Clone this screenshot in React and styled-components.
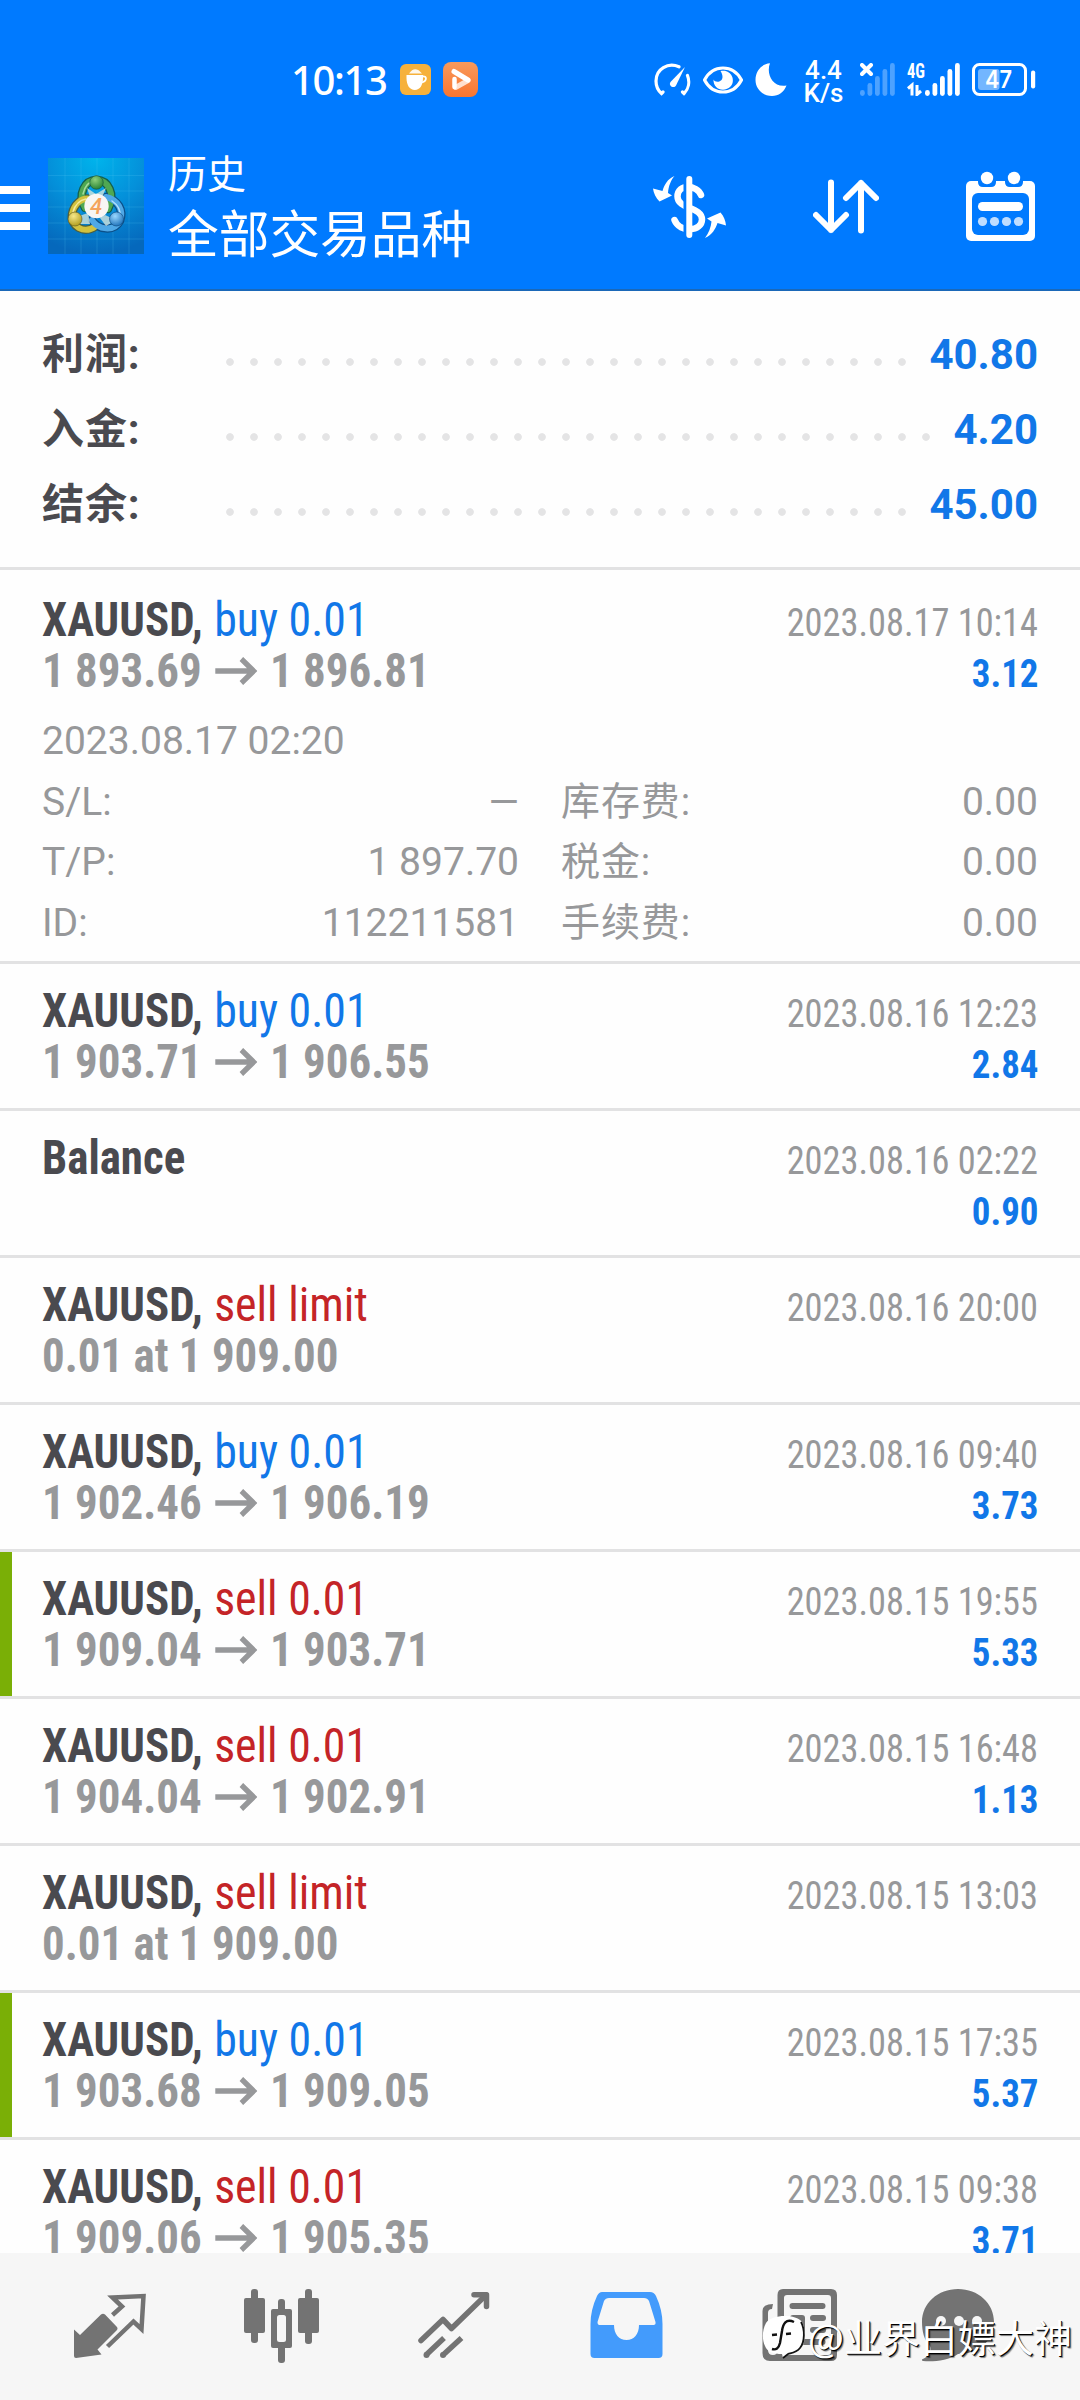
import React from "react";
import styled, { createGlobalStyle } from "styled-components";

const sans = `Roboto, "Noto Sans CJK SC", sans-serif`;
const condensed = `"Roboto Condensed", Roboto, "Noto Sans CJK SC", sans-serif`;

const Global = createGlobalStyle`
  body { margin: 0; background: #fefefe; }
  * { box-sizing: border-box; }
  svg { display: block; flex: none; }
`;

const Screen = styled.div`
  position: relative;
  width: 1080px;
  height: 2400px;
  display: flex;
  flex-direction: column;
  overflow: hidden;
  background: #fefefe;
  font-family: ${sans};
`;

const Header = styled.header`
  flex: none;
  height: 291px;
  background: #007aff;
  border-bottom: 2px solid #1b68b8;
  color: #fff;
`;

const StatusBar = styled.div`
  height: 123px;
  padding: 36px 44px 0 291px;
  display: flex;
  align-items: center;
`;

const Clock = styled.span`
  width: 109px;
  font: 500 40px/56px "Noto Sans", sans-serif;
  letter-spacing: -1.4px;
`;

const StatusApps = styled.div`
  display: flex;
  align-items: center;
  gap: 12px;
  flex: 1;
`;

const StatusIcons = styled.div`
  display: flex;
  align-items: center;
  gap: 11px;
`;

const NetSpeed = styled.div`
  width: 51px;
  margin-top: 4px;
  display: flex;
  flex-direction: column;
  align-items: center;
  font: 500 26px/22.5px Roboto, sans-serif;
`;

const AppBar = styled.div`
  height: 166px;
  padding-right: 45px;
  display: flex;
  align-items: center;
`;

const MenuButton = styled.div`
  width: 30px;
  height: 44px;
  margin: 4px 18px 0 0;
  display: flex;
  flex-direction: column;
  justify-content: space-between;
`;

const MenuBar = styled.i`
  height: 8px;
  background: #fff;
`;

const Titles = styled.div`
  flex: 1;
  margin: 8px 0 0 24px;
`;

const Subtitle = styled.div`
  font-size: 39px;
  line-height: 51px;
`;

const Title = styled.div`
  font-size: 50.7px;
  line-height: 70px;
`;

const Actions = styled.div`
  margin-top: 1px;
  display: flex;
  align-items: center;
  gap: 87px;
`;

const Summary = styled.section`
  flex: none;
  padding: 26px 42px 25px;
  border-bottom: 3px solid #e2e2e3;
`;

const SummaryRow = styled.div`
  height: 75px;
  display: flex;
  font-size: 42px;
  font-weight: 700;
  line-height: 75px;
`;

const SummaryLabel = styled.span`
  width: 176px;
  color: #4a4a4f;
  letter-spacing: 0.9px;
`;

const Leader = styled.span`
  flex: 1;
  height: 12px;
  margin: 39px 10px 0 0;
  background: radial-gradient(circle at 12px 6px, #e4e4e5 3.4px, transparent 4.2px) 0 0 / 24px 12px repeat-x;
`;

const SummaryValue = styled.span`
  color: #1177e8;
`;

const List = styled.main`
  flex: 1;
  min-height: 0;
  overflow: hidden;
`;

const Item = styled.article`
  height: ${(p) => (p.$open ? 394 : 147)}px;
  display: flex;
  border-bottom: 3px solid #e2e2e3;
`;

const Marker = styled.div`
  width: 12px;
  background: ${(p) => (p.$on ? "#7aaf06" : "transparent")};
`;

const Body = styled.div`
  flex: 1;
  padding: ${(p) => (p.$open ? 24 : 21)}px 42px 0 30px;
`;

const Deal = styled.div`
  display: flex;
  justify-content: space-between;
  font-family: ${condensed};
`;

const Left = styled.div`
  width: 500px;
  font-size: 48px;
  line-height: 51px;
  white-space: pre;
`;

const Right = styled.div`
  width: 290px;
  padding-top: 4px;
  font-size: 39px;
  line-height: 51px;
  color: #97989a;
`;

const Line = styled.div`
  height: 51px;
  display: flex;
  justify-content: ${(p) => (p.$end ? "flex-end" : "flex-start")};
  transform: scaleX(${(p) => (p.$end ? 0.932 : 0.936)});
  transform-origin: ${(p) => (p.$end ? "right" : "left")};
`;

const Ticker = styled.b`
  color: #4a4a4f;
`;

const Side = styled.span`
  margin-left: 1.5px;
  color: ${(p) => (p.$sell ? "#c42427" : "#1177e8")};
  transform: scaleX(1.02);
  transform-origin: left;
`;

const Price = styled.b`
  display: flex;
  align-items: center;
  gap: 14px;
  color: #97989a;
`;

const Profit = styled.b`
  color: #1177e8;
  transform: scaleX(1.015);
  transform-origin: right;
`;

const Details = styled.div`
  margin-top: 11px;
  color: #97989a;
  font-size: 39px;
  line-height: 60.5px;
`;

const DetailGrid = styled.div`
  display: grid;
  grid-template-columns: 477px 477px;
  column-gap: 42px;
`;

const Detail = styled.div`
  display: flex;
  justify-content: space-between;
`;

const DetailLabel = styled.span`
  letter-spacing: ${(p) => (p.$wide ? 0.9 : 0)}px;
`;

const TabBar = styled.nav`
  flex: none;
  height: 147px;
  padding: 25px 24px 0;
  display: grid;
  grid-template-columns: repeat(6, 172px);
  justify-items: center;
  align-items: start;
  background: #f6f6f6;
`;

const Watermark = styled.div`
  position: absolute;
  left: 762px;
  top: 2309px;
  display: flex;
  align-items: center;
  gap: 3px;
  color: #fff;
  font: 400 38px/54px "Noto Sans CJK SC", sans-serif;
  text-shadow: 1px 1px 0 #000, 2px 2px 1px rgba(0, 0, 0, 0.5);
`;

const CupIcon = () => (
  <svg width="31" height="31" viewBox="0 0 31 31">
    <rect width="31" height="31" rx="6" fill="#f6b13c" />
    <path d="M9 9.500Q15 1 22 9.500Z" fill="#fff" opacity=".9" />
    <path d="M6.500 11H23v3c0 7-3 12-8.200 12S6.500 21 6.500 14z" fill="#fff" />
    <path d="M22.500 12.500c4.500-1 4.800 4.500-.5 6" fill="none" stroke="#fff" strokeWidth="1.800" />
  </svg>
);

const PlayIcon = () => (
  <svg width="35" height="35" viewBox="0 0 35 35">
    <defs>
      <linearGradient id="play" x1="0" y1="0" x2="0" y2="1">
        <stop offset="0" stopColor="#f89a5c" />
        <stop offset="1" stopColor="#f9752f" />
      </linearGradient>
    </defs>
    <rect width="35" height="35" rx="8" fill="url(#play)" />
    <path d="M25 18.500L12.500 25.500" stroke="#ffe0ce" strokeWidth="5" strokeLinecap="round" />
    <path d="M11 9.500L25 18" stroke="#fff" strokeWidth="5" strokeLinecap="round" />
    <path d="M11.500 17v8" stroke="#fff" strokeWidth="4.500" strokeLinecap="round" />
  </svg>
);

const GaugeIcon = () => (
  <svg width="37" height="33" viewBox="0 0 37 33" fill="none" stroke="#fff" strokeWidth="3.200" strokeLinecap="round">
    <path d="M25 3.800C14-1 2 6 2 18 2 23 4 27.500 7.500 30.500L9 29" />
    <path d="M33.500 12.500C36 19 34.500 26 30 30.500L28.500 29" />
    <path d="M16.500 19L31 4 22 22.500C20 26 14 23 16.500 19z" fill="#fff" stroke="none" />
  </svg>
);

const EyeIcon = () => (
  <svg width="42" height="28" viewBox="0 0 42 28">
    <path d="M2.500 14C11-2 31-2 39.500 14 31 30 11 30 2.500 14z" fill="none" stroke="#fff" strokeWidth="3.200" strokeLinejoin="round" />
    <path d="M18.500 5C29 2.500 34 14 29 20 22 27.500 11 23 11.500 13.500 13 17 20.500 16.500 20.500 11 20.500 8.500 19.500 6.500 18.500 5z" fill="#fff" />
  </svg>
);

const MoonIcon = () => (
  <svg width="32" height="33" viewBox="0 0 32 33">
    <path d="M15 .3C11 10 17 25 31.500 22.500 29 29 23.500 33 17 33 8 33 .5 26 .5 17 .5 8 6.500 1 15 .3z" fill="#fff" />
  </svg>
);

const bars = [[0, 27, 6], [7.5, 20, 13], [15, 13, 20], [22.5, 6, 27], [30, 0, 33]];

const Bars = ({ x, dim }) =>
  bars.map(([bx, y, h]) => (
    <rect key={bx} x={x + bx} y={y} width="4.800" height={h} rx="2.400" fill="#fff" opacity={dim ? 0.3 : 1} />
  ));

const NoSimIcon = () => (
  <svg width="36" height="33" viewBox="0 0 36 33">
    <path d="M2 2l9 9M11 2l-9 9" stroke="#fff" strokeWidth="4" strokeLinecap="round" />
    <Bars x={0} dim />
  </svg>
);

const SignalIcon = () => (
  <svg width="54" height="33" viewBox="0 0 54 33">
    <text x="0" y="14.500" fontFamily="Roboto Condensed" fontWeight="700" fontSize="20" textLength="18" lengthAdjust="spacingAndGlyphs" fill="#fff">4G</text>
    <path d="M1 25.500L5 22v10.500M10 22v9.500L14 28" fill="none" stroke="#fff" strokeWidth="3" />
    <Bars x={18} />
  </svg>
);

const BatteryIcon = () => (
  <svg width="64" height="33" viewBox="0 0 64 33">
    <rect x="1.500" y="1.500" width="52" height="30" rx="6" fill="none" stroke="#fff" strokeWidth="3" />
    <rect x="6" y="6" width="21.500" height="21" rx="3" fill="#fff" opacity=".45" />
    <rect x="59" y="7.500" width="4.200" height="18" rx="2" fill="#fff" />
    <text x="26.500" y="25" textAnchor="middle" fontFamily="Inter" fontWeight="600" fontSize="24" textLength="27" lengthAdjust="spacingAndGlyphs" fill="#fff">47</text>
  </svg>
);

const AppLogo = () => (
  <svg width="96" height="96" viewBox="0 0 96 96">
    <defs>
      <radialGradient id="sky" cx=".5" cy="0" r="1">
        <stop offset="0" stopColor="#00b4ec" />
        <stop offset=".5" stopColor="#0490da" />
        <stop offset="1" stopColor="#0568bc" />
      </radialGradient>
      <radialGradient id="green" cx=".4" cy=".3" r=".8">
        <stop offset="0" stopColor="#8fd07c" />
        <stop offset="1" stopColor="#1c7a2c" />
      </radialGradient>
      <radialGradient id="gold" cx=".4" cy=".3" r=".8">
        <stop offset="0" stopColor="#f6e88a" />
        <stop offset="1" stopColor="#a99412" />
      </radialGradient>
      <radialGradient id="blue" cx=".4" cy=".3" r=".8">
        <stop offset="0" stopColor="#9ad8ff" />
        <stop offset="1" stopColor="#1268b4" />
      </radialGradient>
    </defs>
    <rect width="96" height="96" fill="url(#sky)" />
    <path d="M0 17.500H96M0 33H96M0 49H96M0 65H96M0 81H96M17 0V96M33 0V96M49 0V96M65 0V96M81 0V96" stroke="#5cc8f4" strokeOpacity=".2" />
    <g fill="none" strokeLinecap="round">
      <path d="M37 50C29 36 37 22 48.500 22S68 36 60 51" stroke="#14604c" strokeWidth="8.500" />
      <path d="M48 68C36 77 22 68 24 56 26 46 34 39 42 41" stroke="#4c6040" strokeWidth="8.500" />
      <path d="M58 39C70 42 76 52 72 63 66 74 50 72 44 62" stroke="#0c4f88" strokeWidth="8.500" />
      <path d="M37 50C29 36 37 22 48.500 22S68 36 60 51" stroke="#4fa852" strokeWidth="6" />
      <path d="M48 68C36 77 22 68 24 56 26 46 34 39 42 41" stroke="#d2c23e" strokeWidth="6" />
      <path d="M58 39C70 42 76 52 72 63 66 74 50 72 44 62" stroke="#4fa8e6" strokeWidth="6" />
      <path d="M35 36C37 27 42 23 48 22" stroke="#a6dc9c" strokeWidth="1.500" />
      <path d="M25 54C27 47 32 42 38 41" stroke="#f4ea9c" strokeWidth="1.500" />
      <path d="M64 43C70 47 73 52 72 59" stroke="#b4e0fc" strokeWidth="1.500" />
    </g>
    <path d="M39 30L48 36 58 30 53 42H43zM31 58L40 55 42 66 30 66zM57 57L68 62 58 68 52 60z" fill="#dfe9dc" opacity=".75" />
    <circle cx="48.500" cy="24.500" r="6.800" fill="url(#green)" stroke="#14503c" strokeWidth=".6" />
    <circle cx="27" cy="61" r="7" fill="url(#gold)" stroke="#5a5420" strokeWidth=".6" />
    <circle cx="68.500" cy="61" r="7" fill="url(#blue)" stroke="#0c4478" strokeWidth=".6" />
    <circle cx="48.500" cy="48" r="12.200" fill="#f7f6f4" />
    <text x="48" y="56" textAnchor="middle" fontFamily="Roboto" fontStyle="italic" fontWeight="500" fontSize="22" fill="#f4a45c">4</text>
  </svg>
);

const CurrencyIcon = () => (
  <svg width="73" height="62" viewBox="0 0 73 62" fill="#fff">
    <path d="M21.500 0C14.500 3 11.500 8.500 9.500 15L0 12.500C.5 17 3 22 6.500 25.500L19 19.500 15 17C15.500 10 18 4 21.500 0z" />
    <path d="M52 62C59 59 62.500 53 64.500 47L73 49.500C72.500 45 71 40 67.500 36.500L54 42.500 58.500 45.500C58 51 55.500 57.500 52 62z" />
    <path d="M48 19C44 8.500 24.500 7.500 24.500 20.500c0 13 24.500 10 24.500 23 0 12-22 14-27.500.5" fill="none" stroke="#fff" strokeWidth="6.500" strokeLinecap="round" />
    <rect x="30.500" y="0" width="8" height="62" fill="#007aff" />
    <rect x="33.300" y="0" width="6" height="62" rx="3" />
  </svg>
);

const SortIcon = () => (
  <svg width="66" height="55" viewBox="0 0 66 55" fill="none" stroke="#fff" strokeWidth="6" strokeLinecap="round" strokeLinejoin="round">
    <path d="M18 3.500V51M3 36l15 15 15-15" />
    <path d="M48 51.500V4M33 19L48 4l15 15" />
  </svg>
);

const CalendarIcon = () => (
  <svg width="69" height="72" viewBox="0 0 69 72">
    <rect x="0" y="10" width="69" height="60" rx="5" fill="#fff" />
    <rect x="6" y="22" width="57" height="42" rx="6" fill="#007aff" />
    <path d="M12 9v2q0 5 5 5h8q5 0 5-5V9zM39 9v2q0 5 5 5h8q5 0 5-5V9z" fill="#007aff" />
    <circle cx="21" cy="7" r="6.200" fill="#fff" />
    <circle cx="48" cy="7" r="6.200" fill="#fff" />
    <rect x="12" y="31" width="45" height="9" rx="4.500" fill="#fff" />
    {[16.5, 28.5, 40.5, 52.5].map((x) => (
      <circle key={x} cx={x} cy="50.500" r="4.600" fill="#fff" opacity=".75" />
    ))}
  </svg>
);

const ArrowIcon = () => (
  <svg width="45" height="28" viewBox="0 0 45 28" fill="none" stroke="#97989a" strokeWidth="5.600">
    <path d="M0 14H41M28 2L41 14 28 26" />
  </svg>
);

const Tile = ({ children }) => (
  <svg width="96" height="96" viewBox="0 0 96 96" fill="#737373">{children}</svg>
);

const QuotesTab = () => (
  <Tile>
    <path d="M39 36.500q2-1.500 4 0L54.500 48.500q2 2 0 4L35.500 71.500 39.500 76.500 14 80q-2 0-2-2V51.500L18 57z" />
    <path d="M50.500 37L60 28.500 50.500 19.500 81.500 18 79.500 51 71.500 43.500 45.500 68.500" fill="none" stroke="#737373" strokeWidth="4.500" />
  </Tile>
);

const CandlesTab = () => (
  <Tile>
    <rect x="17" y="11" width="7" height="54" rx="3" />
    <rect x="10" y="20" width="21" height="35" rx="2" />
    <rect x="71" y="11" width="7" height="55" rx="3" />
    <rect x="64" y="20" width="21" height="35" rx="2" />
    <rect x="44" y="21" width="7" height="64" rx="3" />
    <rect x="37" y="31" width="21" height="39" rx="2" />
    <rect x="43" y="37" width="9" height="27" rx="2.500" fill="#f6f6f6" />
  </Tile>
);

const TrendTab = () => (
  <Tile>
    <g fill="none" stroke="#737373" strokeWidth="5.500" strokeLinecap="round" strokeLinejoin="round">
      <path d="M15 62.500L37 41.500 45.500 50.500 80 17" />
      <path d="M68 16.800H80.500V28.500" />
    </g>
    <path d="M20 77L38 60M37 77L55.500 60" stroke="#737373" strokeWidth="5.500" />
    <circle cx="20.500" cy="77" r="3" />
    <circle cx="37" cy="77" r="3" />
  </Tile>
);

const HistoryTab = () => (
  <Tile>
    <path fill="#439bfc" fillRule="evenodd" d="M24 14H72Q76 14 78 18 84.500 32 84.500 46V76Q84.500 80 80.500 80H16.500Q12.500 80 12.500 76V46Q12.500 32 19 18 21 14 24 14zM31 20Q27.500 20 26 23L19.500 44Q19.500 47 21.500 47H36C36 56 41 62 48.500 62 56 62 61 56 61 47H75.500Q78 47 77.500 44L71 23Q69.500 20 66 20z" />
  </Tile>
);

const NewsTab = () => (
  <Tile>
    <path fillRule="evenodd" d="M33 11H81Q87 11 87 17V77Q87 83 81 83H20Q12.500 83 12.500 75V33Q12.500 26 23 26L22 31Q18 31 18 35V72Q18 77 23 77 27.500 77 27.500 72V17Q27.500 11 33 11zM37 17Q34 17 34 20V77H78Q81 77 81 74V20Q81 17 78 17z" />
    <rect x="39.500" y="25" width="36" height="6" rx="3" />
    <rect x="40" y="37" width="15" height="18" rx="3" />
    <rect x="60" y="37" width="16" height="6" rx="3" />
    <rect x="60" y="49" width="16" height="6" rx="3" />
    <rect x="39.500" y="61" width="36" height="6" rx="3" />
  </Tile>
);

const MessagesTab = () => (
  <Tile>
    <path d="M36 11C56 11 72 25 72 44S56 76 36 76C26 83 10 84 1 83 -1 82 0 81 2 80.500 8 77 10 73 8 68 2 62 0 53 0 44 0 25 16 11 36 11z" />
    <circle cx="19" cy="43" r="5" fill="#f6f6f6" />
    <circle cx="37" cy="43" r="5" fill="#f6f6f6" />
    <circle cx="55" cy="43" r="5" fill="#f6f6f6" />
  </Tile>
);

const WatermarkLogo = () => (
  <svg width="43" height="46" viewBox="0 0 43 46">
    <path d="M4 10C10 1 34 1 40 9c4 7 4 20-1 27-4 4-10 5-14 5l-4 4-1-4C12 41 5 39 3 33 0 27 0 17 4 10z" fill="#fff" />
    <path d="M39 9c4 7 4 20-1 26-4 5-9 5-12 6l-5 4" fill="none" stroke="#111" strokeWidth="1.800" />
    <path d="M32 9C24 5 21 11 20 18L18 30Q16 38 10 36M10 22L15 21.500M24 21L29 20.500" fill="none" stroke="#111" strokeWidth="2.400" />
  </svg>
);

const summary = [
  ["利润:", "40.80"],
  ["入金:", "4.20"],
  ["结余:", "45.00"],
];

const details = [
  { label: "S/L:", value: "—" },
  { label: "库存费:", value: "0.00", wide: true },
  { label: "T/P:", value: "1 897.70" },
  { label: "税金:", value: "0.00", wide: true },
  { label: "ID:", value: "112211581" },
  { label: "手续费:", value: "0.00", wide: true },
];

const deals = [
  { side: "buy", text: "buy 0.01", from: "1 893.69", to: "1 896.81", time: "2023.08.17 10:14", profit: "3.12", open: true },
  { side: "buy", text: "buy 0.01", from: "1 903.71", to: "1 906.55", time: "2023.08.16 12:23", profit: "2.84" },
  { balance: true, time: "2023.08.16 02:22", profit: "0.90" },
  { side: "sell", text: "sell limit", at: "0.01 at 1 909.00", time: "2023.08.16 20:00" },
  { side: "buy", text: "buy 0.01", from: "1 902.46", to: "1 906.19", time: "2023.08.16 09:40", profit: "3.73" },
  { side: "sell", text: "sell 0.01", from: "1 909.04", to: "1 903.71", time: "2023.08.15 19:55", profit: "5.33", marked: true },
  { side: "sell", text: "sell 0.01", from: "1 904.04", to: "1 902.91", time: "2023.08.15 16:48", profit: "1.13" },
  { side: "sell", text: "sell limit", at: "0.01 at 1 909.00", time: "2023.08.15 13:03" },
  { side: "buy", text: "buy 0.01", from: "1 903.68", to: "1 909.05", time: "2023.08.15 17:35", profit: "5.37", marked: true },
  { side: "sell", text: "sell 0.01", from: "1 909.06", to: "1 905.35", time: "2023.08.15 09:38", profit: "3.71" },
];

const DealItem = ({ deal }) => (
  <Item $open={deal.open}>
    <Marker $on={deal.marked} />
    <Body $open={deal.open}>
      <Deal>
        <Left>
          <Line>
            <Ticker>{deal.balance ? "Balance" : "XAUUSD, "}</Ticker>
            {deal.text && <Side $sell={deal.side === "sell"}>{deal.text}</Side>}
          </Line>
          <Line>
            {deal.at && <Price>{deal.at}</Price>}
            {deal.from && (
              <Price>
                <span>{deal.from}</span>
                <ArrowIcon />
                <span>{deal.to}</span>
              </Price>
            )}
          </Line>
        </Left>
        <Right>
          <Line $end><span>{deal.time}</span></Line>
          {deal.profit && <Line $end><Profit>{deal.profit}</Profit></Line>}
        </Right>
      </Deal>
      {deal.open && (
        <Details>
          <div>2023.08.17 02:20</div>
          <DetailGrid>
            {details.map((d) => (
              <Detail key={d.label}>
                <DetailLabel $wide={d.wide}>{d.label}</DetailLabel>
                <span>{d.value}</span>
              </Detail>
            ))}
          </DetailGrid>
        </Details>
      )}
    </Body>
  </Item>
);

export default function App() {
  return (
    <Screen>
      <Global />
      <Header>
        <StatusBar>
          <Clock>10:13</Clock>
          <StatusApps><CupIcon /><PlayIcon /></StatusApps>
          <StatusIcons>
            <GaugeIcon />
            <EyeIcon />
            <MoonIcon />
            <NetSpeed><span>4.4</span><span>K/s</span></NetSpeed>
            <NoSimIcon />
            <SignalIcon />
            <BatteryIcon />
          </StatusIcons>
        </StatusBar>
        <AppBar>
          <MenuButton><MenuBar /><MenuBar /><MenuBar /></MenuButton>
          <AppLogo />
          <Titles>
            <Subtitle>历史</Subtitle>
            <Title>全部交易品种</Title>
          </Titles>
          <Actions><CurrencyIcon /><SortIcon /><CalendarIcon /></Actions>
        </AppBar>
      </Header>
      <Summary>
        {summary.map(([label, value]) => (
          <SummaryRow key={label}>
            <SummaryLabel>{label}</SummaryLabel>
            <Leader />
            <SummaryValue>{value}</SummaryValue>
          </SummaryRow>
        ))}
      </Summary>
      <List>
        {deals.map((d) => <DealItem key={d.time} deal={d} />)}
      </List>
      <TabBar>
        <QuotesTab />
        <CandlesTab />
        <TrendTab />
        <HistoryTab />
        <NewsTab />
        <MessagesTab />
      </TabBar>
      <Watermark><WatermarkLogo />@业界白嫖大神</Watermark>
    </Screen>
  );
}
